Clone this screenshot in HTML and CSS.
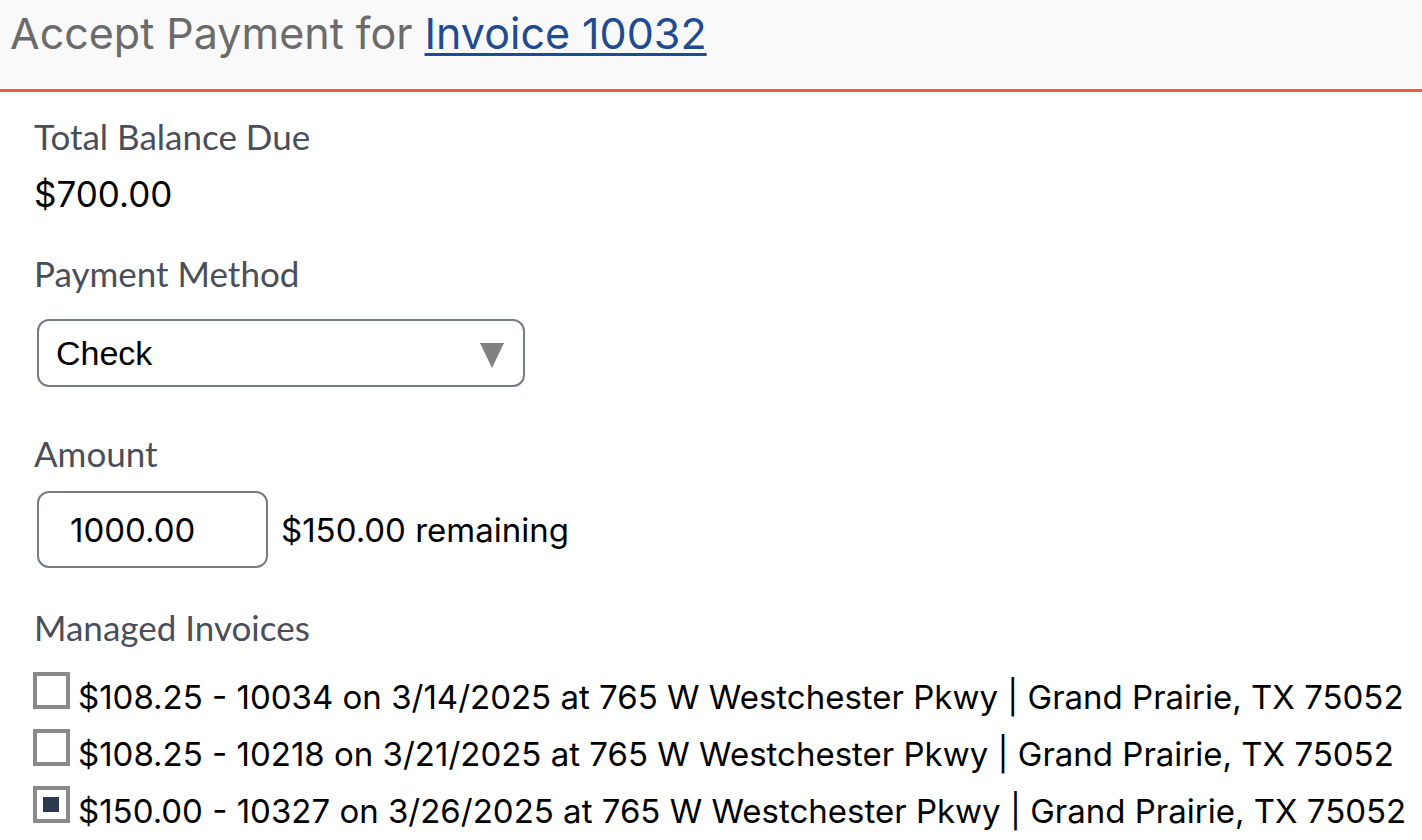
FILE: index.html
```html
<!DOCTYPE html>
<html>
<head>
<meta charset="utf-8">
<link rel="stylesheet" href="styles.css">
</head>
<body>
<header class="header">
  <h1 class="title">Accept Payment for <a class="title-link" href="#">Invoice 10032</a></h1>
</header>
<main class="content">
  <section class="field">
    <div class="label">Total Balance Due</div>
    <div class="value">$700.00</div>
  </section>
  <section class="field">
    <div class="label">Payment Method</div>
    <div class="select">
      <span class="select-text">Check</span>
      <svg class="select-arrow" width="24" height="25" viewBox="0 0 24 25"><polygon points="0,0 24,0 12,25" fill="#808080"/></svg>
    </div>
  </section>
  <section class="field">
    <div class="label">Amount</div>
    <div class="amount-row">
      <div class="amount-input">1000.00</div>
      <span class="remaining">$150.00 remaining</span>
    </div>
  </section>
  <section class="field">
    <div class="label">Managed Invoices</div>
    <ul class="invoices">
      <li class="invoice"><span class="checkbox"></span><span class="invoice-text">$108.25 - 10034 on 3/14/2025 at 765 W Westchester Pkwy | Grand Prairie, TX 75052</span></li>
      <li class="invoice"><span class="checkbox"></span><span class="invoice-text">$108.25 - 10218 on 3/21/2025 at 765 W Westchester Pkwy | Grand Prairie, TX 75052</span></li>
      <li class="invoice"><span class="checkbox checked"></span><span class="invoice-text">$150.00 - 10327 on 3/26/2025 at 765 W Westchester Pkwy | Grand Prairie, TX 75052</span></li>
    </ul>
  </section>
</main>
</body>
</html>
```

FILE: styles.css
```css
html, body {
  margin: 0;
  padding: 0;
  background: #ffffff;
}
body {
  font-family: Lato, "Noto Sans", sans-serif;
}
.header {
  background: #f9f9f9;
  height: 89px;
  border-bottom: 3px solid #ef5a37;
  padding: 0 0 0 10px;
}
.title {
  margin: 0;
  font-family: Inter, sans-serif;
  font-weight: 400;
  font-size: 43px;
  line-height: 66px;
  color: #6b6b6b;
}
.title-link {
  color: #1f4b93;
  text-decoration: underline;
  text-decoration-thickness: 3px;
  text-underline-offset: 4px;
}
.content {
  display: flex;
  flex-direction: column;
  gap: 39px;
  padding: 24px 0 0 34px;
}
.field {
  display: flex;
  flex-direction: column;
  align-items: flex-start;
}
.label {
  font-size: 35px;
  line-height: 40px;
  color: #4a4e58;
  margin-bottom: 18px;
}
.value {
  font-family: Inter, sans-serif;
  font-size: 35px;
  line-height: 40px;
  color: #000;
}
.select {
  width: 488px;
  height: 68px;
  box-sizing: border-box;
  border: 2px solid #787c86;
  border-radius: 12px;
  display: flex;
  align-items: center;
  justify-content: space-between;
  padding: 0 19px 0 17px;
  margin: 8px 0 7px 3px;
}
.select-text {
  font-family: "Liberation Sans", Arial, sans-serif;
  font-size: 34px;
  color: #000;
}
.select-arrow {
  margin-top: 4px;
}
.amount-row {
  display: flex;
  align-items: center;
  gap: 13px;
}
.amount-input {
  width: 231px;
  height: 77px;
  box-sizing: border-box;
  border: 2px solid #787c86;
  border-radius: 12px;
  padding-left: 31px;
  display: flex;
  align-items: center;
  font-family: Inter, sans-serif;
  font-size: 33px;
  color: #000;
  margin-left: 3px;
}
.remaining {
  font-family: Inter, sans-serif;
  font-size: 33px;
  color: #000;
}
.invoices {
  list-style: none;
  margin: 7px 0 0 -1px;
  padding: 0;
}
.invoice {
  line-height: 57px;
  height: 57px;
  white-space: nowrap;
}
.checkbox {
  display: inline-block;
  vertical-align: baseline;
  width: 37px;
  height: 37px;
  box-sizing: border-box;
  border: 4px solid #8a8a8a;
  background: #fff;
  margin-right: 8px;
}
.checkbox.checked::after {
  content: "";
  display: block;
  width: 16px;
  height: 15px;
  margin: 7px 0 0 6px;
  background: #2d3a4d;
}
.invoice-text {
  font-family: Inter, sans-serif;
  font-size: 33px;
  line-height: 40px;
  color: #000;
}
```
